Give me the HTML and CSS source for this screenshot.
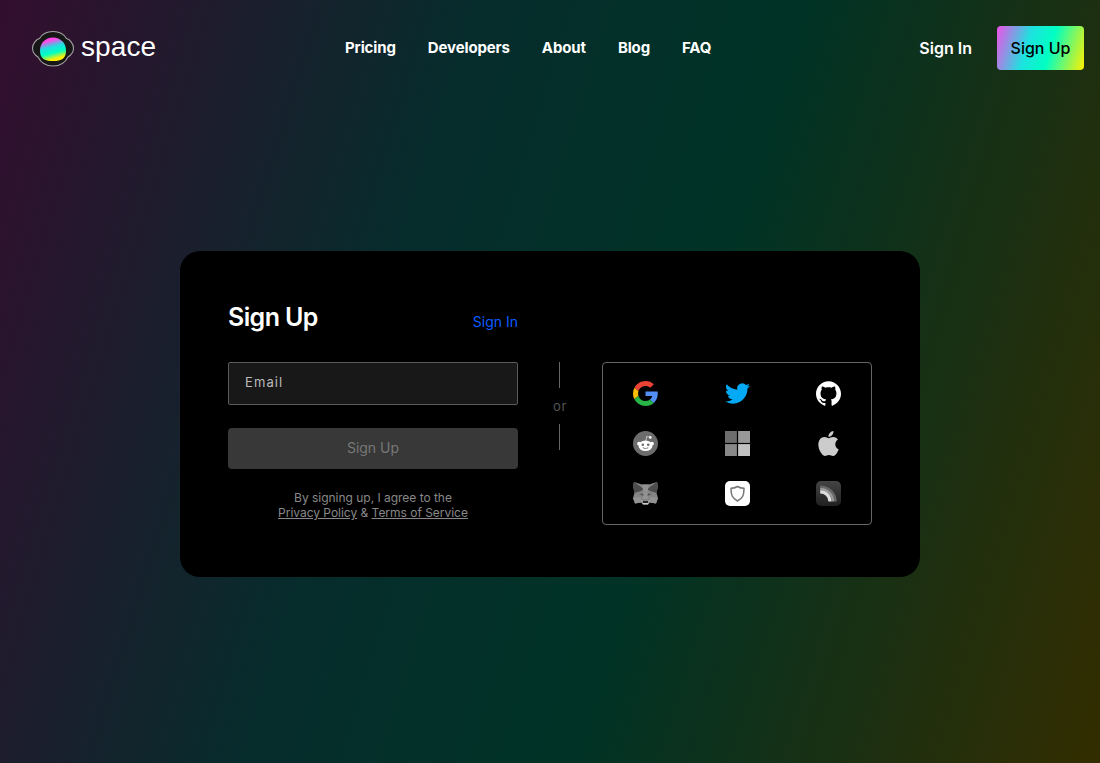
FILE: index.html
```html
<!DOCTYPE html>
<html lang="en">
<head>
<meta charset="utf-8">
<title>space – Sign Up</title>
<link rel="stylesheet" href="styles.css">
</head>
<body>
<header class="header">
  <a class="brand">
    <svg class="brand-mark" width="44" height="38" viewBox="0 0 44 38">
      <defs><linearGradient id="visor" x1=".35" y1="0" x2=".65" y2="1"><stop offset=".12" stop-color="#ff48e8"/><stop offset=".4" stop-color="#20dfe0"/><stop offset=".64" stop-color="#00ffc2"/><stop offset=".9" stop-color="#fff000"/></linearGradient></defs>
      <path d="M22 1.500C28 1.500 32.500 3.500 35.500 8.500C38.500 9 42.500 14 42.500 18C42.500 22 39.500 25.500 37 27C34 33 29 36 22 36C15 36 10 33 7 27C4.500 25.500 1.500 22 1.500 18C1.500 14 5.500 9 8.500 8.500C11.500 3.500 16 1.500 22 1.500Z" fill="#171717" stroke="#a4a0a4" stroke-width="1.100"/>
      <path d="M22 7.500C29.500 7.500 35 13 35 20.500C35 28.500 31 31 22 31C13 31 9 28.500 9 20.500C9 13 14.500 7.500 22 7.500Z" fill="url(#visor)"/>
    </svg>
    <span class="brand-name">space</span>
  </a>
  <nav class="nav"><a>Pricing</a><a>Developers</a><a>About</a><a>Blog</a><a>FAQ</a></nav>
  <div class="account"><a>Sign In</a><a class="account-signup">Sign Up</a></div>
</header>
<main class="main">
  <section class="card">
    <div class="heading"><h1>Sign Up</h1><a class="switch">Sign In</a></div>
    <div class="columns">
      <form class="form">
        <div class="field">Email</div>
        <button class="submit" type="button">Sign Up</button>
        <p class="terms">By signing up, I agree to the<br><a>Privacy Policy</a> &amp; <a>Terms of Service</a></p>
      </form>
      <div class="divider"><i></i><span>or</span><i></i></div>
      <div class="providers">
        <svg viewBox="0 0 48 48"><path fill="#ea4335" d="M24 9.500c3.540 0 6.710 1.220 9.210 3.600l6.850-6.850C35.900 2.380 30.470 0 24 0 14.620 0 6.510 5.380 2.560 13.220l7.980 6.190C12.430 13.720 17.740 9.500 24 9.500z"/><path fill="#5390f5" d="M47.500 24.550c0-1.570-.15-3.090-.38-4.550H24v9.020h12.940c-.58 2.960-2.260 5.480-4.780 7.180l7.730 6c4.510-4.180 7.610-10.360 7.610-17.650z"/><path fill="#fbbc05" d="M10.530 28.590c-.48-1.450-.76-2.990-.76-4.590s.27-3.140.76-4.590l-7.980-6.190C.92 16.460 0 20.120 0 24s.92 7.540 2.560 10.780l7.970-6.190z"/><path fill="#28b446" d="M24 48c6.480 0 11.930-2.130 15.890-5.810l-7.730-6c-2.150 1.450-4.920 2.300-8.160 2.300-6.260 0-11.570-4.220-13.470-9.910l-7.980 6.190C6.510 42.620 14.620 48 24 48z"/></svg>
        <svg viewBox="0 0 24 24"><path fill="#03a9f4" d="M23.953 4.570a10 10 0 01-2.825.775 4.958 4.958 0 002.163-2.723c-.951.555-2.005.959-3.127 1.184a4.920 4.920 0 00-8.384 4.482C7.690 8.095 4.067 6.130 1.640 3.162a4.822 4.822 0 00-.666 2.475c0 1.710.87 3.213 2.188 4.096a4.904 4.904 0 01-2.228-.616v.06a4.923 4.923 0 003.946 4.827 4.996 4.996 0 01-2.212.085 4.936 4.936 0 004.604 3.417 9.867 9.867 0 01-6.102 2.105c-.39 0-.779-.023-1.170-.067a13.995 13.995 0 007.557 2.209c9.053 0 13.998-7.496 13.998-13.985 0-.21 0-.42-.015-.63A9.935 9.935 0 0024 4.590z"/></svg>
        <svg viewBox="0 0 24 24"><path fill="#fff" d="M12 .297c-6.630 0-12 5.373-12 12 0 5.303 3.438 9.800 8.205 11.385.6.113.82-.258.82-.577 0-.285-.01-1.040-.015-2.040-3.338.724-4.042-1.610-4.042-1.610C4.422 18.070 3.633 17.700 3.633 17.700c-1.087-.744.084-.729.084-.729 1.205.084 1.838 1.236 1.838 1.236 1.070 1.835 2.809 1.305 3.495.998.108-.776.417-1.305.76-1.605-2.665-.3-5.466-1.332-5.466-5.930 0-1.310.465-2.380 1.235-3.220-.135-.303-.54-1.523.105-3.176 0 0 1.005-.322 3.300 1.230.96-.267 1.980-.399 3-.405 1.020.006 2.040.138 3 .405 2.280-1.552 3.285-1.230 3.285-1.230.645 1.653.24 2.873.12 3.176.765.84 1.230 1.910 1.230 3.220 0 4.610-2.805 5.625-5.475 5.920.42.36.81 1.096.81 2.220 0 1.606-.015 2.896-.015 3.286 0 .315.21.69.825.57C20.565 22.092 24 17.592 24 12.297c0-6.627-5.373-12-12-12"/></svg>
        <svg viewBox="0 0 25 25"><circle cx="12.500" cy="12.500" r="12.500" fill="#6c6c6c"/><g fill="#fff"><ellipse cx="12.500" cy="14.700" rx="7" ry="5.200"/><circle cx="6" cy="12.600" r="1.900"/><circle cx="19" cy="12.600" r="1.900"/><circle cx="17.300" cy="6.400" r="1.300"/></g><path d="M12.800 10L13.700 5.500L17 6.300" fill="none" stroke="#ddd" stroke-width=".8"/><circle cx="9.800" cy="13.700" r="1.300" fill="#6c6c6c"/><circle cx="15.200" cy="13.700" r="1.300" fill="#6c6c6c"/><path d="M9.700 16.700Q12.500 18.600 15.300 16.700" fill="none" stroke="#6c6c6c" stroke-width=".9"/></svg>
        <svg viewBox="0 0 25 25"><path fill="#6d6d6d" d="M0 0h11.900v11.900H0z"/><path fill="#999" d="M13.100 0H25v11.900H13.100z"/><path fill="#888" d="M0 13.100h11.900V25H0z"/><path fill="#c1c1c1" d="M13.100 13.100H25V25H13.100z"/></svg>
        <svg viewBox="0 0 24 24"><path fill="#ccc" d="M12.152 6.896c-.948 0-2.415-1.078-3.960-1.040-2.040.027-3.910 1.183-4.961 3.014-2.117 3.675-.546 9.103 1.519 12.090 1.013 1.454 2.208 3.090 3.792 3.039 1.520-.065 2.090-.987 3.935-.987 1.831 0 2.350.987 3.960.948 1.637-.026 2.676-1.480 3.676-2.948 1.156-1.688 1.636-3.325 1.662-3.415-.039-.013-3.182-1.221-3.220-4.857-.026-3.040 2.480-4.494 2.597-4.559-1.429-2.090-3.623-2.324-4.390-2.376-2-.156-3.675 1.090-4.610 1.090zM15.530 3.830c.843-1.012 1.400-2.427 1.245-3.830-1.207.052-2.662.805-3.532 1.818-.78.896-1.454 2.338-1.273 3.714 1.338.104 2.715-.688 3.559-1.701"/></svg>
        <svg viewBox="0 0 25 25"><path fill="#858585" d="M1 1L9 3.500H16L24 1L25 5L23.500 12L25 17L23 22.500L17 21.500L15 23.500H10L8 21.500L2 22.500L0 17L1.500 12L0 5Z"/><path fill="#4c4c4c" d="M1 1L11 8L8 10L1.500 12L0 5ZM24 1L14 8L17 10L23.500 12L25 5Z"/><path fill="#929292" d="M9 3.500H16L14.500 11L15.500 18H9.500L10.500 11ZM0 17L8 16L8 21.500L2 22.500ZM25 17L17 16V21.500L23 22.500Z"/><path fill="#555" d="M6 13L10 12.500L10.500 15ZM19 13L15 12.500L14.500 15Z"/><path fill="#ccc" d="M8 19L10 23.500H15L17 19L15 20.500H10Z"/><path fill="#222" d="M10 20H15L15.500 22H9.500Z"/></svg>
        <svg viewBox="0 0 25 25"><rect width="25" height="25" rx="5" fill="#fff"/><path d="M12.500 5.500Q15.500 7.300 19 7.300C19 14 18 17 12.500 20C7 17 6 14 6 7.300Q9.500 7.300 12.500 5.500Z" fill="none" stroke="#777" stroke-width="1.500" stroke-linejoin="round"/></svg>
        <svg viewBox="0 0 25 25"><defs><linearGradient id="tile" x2="0" y2="1"><stop stop-color="#444"/><stop offset="1" stop-color="#202020"/></linearGradient></defs><rect width="25" height="25" rx="5" fill="url(#tile)"/><g fill="none"><path d="M4.200 5.700A15 15 0 0119.500 20.500" stroke="#666" stroke-width="2.600"/><path d="M4.200 8.100A12.500 12.500 0 0117 20.500" stroke="#999" stroke-width="2.600"/><path d="M4.200 10.800A9.700 9.700 0 0114 20.500" stroke="#ddd" stroke-width="3.200"/></g></svg>
      </div>
    </div>
  </section>
</main>
</body>
</html>
```
FILE: styles.css
```css
* { box-sizing: border-box; }
body {
  margin: 0;
  height: 763px;
  overflow: hidden;
  display: flex;
  flex-direction: column;
  font-family: Inter, sans-serif;
  color: #fff;
  background: linear-gradient(107deg, #330e2e 0%, #062c2c 36%, #003326 60%, #332d00 100%);
}
.header {
  height: 96px;
  padding: 0 16px 0 31px;
  display: grid;
  grid-template-columns: 314px 1fr auto;
  align-items: center;
}
.brand { display: flex; align-items: center; gap: 6px; }
.brand-mark { display: block; margin-top: 1px; }
.brand-name { font: 28px/36px "Liberation Sans", Arial, sans-serif; letter-spacing: .1px; padding-bottom: 3px; }
.nav { display: flex; gap: 32px; padding-bottom: 2px; font-size: 15px; font-weight: 700; letter-spacing: -.13px; }
.account { display: flex; align-items: center; gap: 25px; font-size: 16px; font-weight: 600; letter-spacing: 0; }
.account-signup {
  width: 87px;
  height: 44px;
  line-height: 44px;
  text-align: center;
  border-radius: 4px;
  color: #000;
  font-weight: 500;
  background: linear-gradient(107deg, #f050e8 0%, #1de2df 36%, #00ffc2 60%, #fff000 100%);
}
.main { flex: 1; padding: 155px 180px 0; }
.card { height: 326px; border-radius: 20px; background: #000; padding: 48px; }
.heading { width: 290px; height: 63px; display: flex; justify-content: space-between; }
.heading h1 { margin: 0; font-size: 25px; line-height: 36px; font-weight: 600; letter-spacing: -.6px; }
.switch { font-size: 14px; line-height: 46px; color: #0b5cff; }
.columns { display: grid; grid-template-columns: 290px 84px 270px; }
.field {
  height: 43px;
  padding: 0 16px;
  border: 1px solid #5b5b5b;
  border-radius: 2px;
  background: #181818;
  color: #bbb;
  font-size: 13px;
  line-height: 39px;
  letter-spacing: 1.1px;
}
.submit {
  display: block;
  width: 100%;
  height: 41px;
  margin-top: 23px;
  padding: 0 0 2px;
  border: 0;
  border-radius: 4px;
  background: #373837;
  color: #777;
  font: 14px Inter, sans-serif;
}
.terms { margin: 21px 0 0; text-align: center; font-size: 12px; line-height: 15px; letter-spacing: -.02px; color: #888; }
.terms a { text-decoration: underline; }
.divider { display: flex; flex-direction: column; align-items: center; padding-right: 1px; font-size: 13px; color: #555; }
.divider i { width: 1px; height: 26px; background: #666; }
.divider span { height: 36px; line-height: 36px; letter-spacing: .6px; padding-left: 1px; }
.providers {
  height: 163px;
  border: 1px solid #666;
  border-radius: 4px;
  padding: 18px 30px;
  display: grid;
  grid-template-columns: repeat(3, 25px);
  justify-content: space-between;
  row-gap: 25px;
  grid-auto-rows: 25px;
}
.providers svg { width: 25px; height: 25px; }
```
